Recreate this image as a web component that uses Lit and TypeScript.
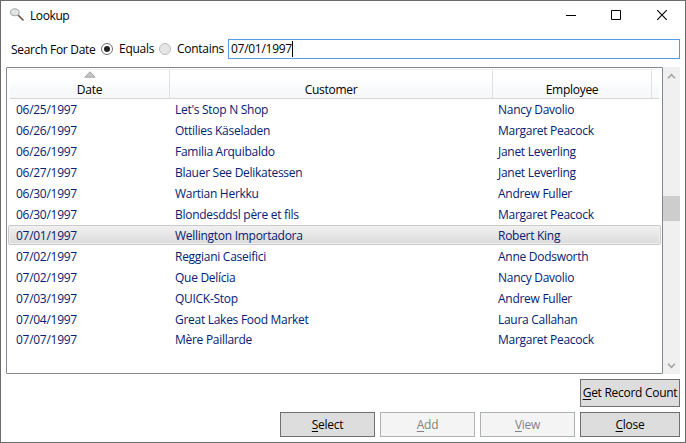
import { LitElement, html, css } from "lit";
import { customElement, property } from "lit/decorators.js";
import { classMap } from "lit/directives/class-map.js";

const ROWS: [string, string, string][] = [
  ["06/25/1997", "Let's Stop N Shop", "Nancy Davolio"],
  ["06/26/1997", "Ottilies Käseladen", "Margaret Peacock"],
  ["06/26/1997", "Familia Arquibaldo", "Janet Leverling"],
  ["06/27/1997", "Blauer See Delikatessen", "Janet Leverling"],
  ["06/30/1997", "Wartian Herkku", "Andrew Fuller"],
  ["06/30/1997", "Blondesddsl père et fils", "Margaret Peacock"],
  ["07/01/1997", "Wellington Importadora", "Robert King"],
  ["07/02/1997", "Reggiani Caseifici", "Anne Dodsworth"],
  ["07/02/1997", "Que Delícia", "Nancy Davolio"],
  ["07/03/1997", "QUICK-Stop", "Andrew Fuller"],
  ["07/04/1997", "Great Lakes Food Market", "Laura Callahan"],
  ["07/07/1997", "Mère Paillarde", "Margaret Peacock"],
];
const SELECTED = 6;

@customElement("dialog-button")
class DialogButton extends LitElement {
  @property() label = "";
  @property({ type: Boolean, reflect: true }) disabled = false;
  static styles = css`
    :host { display: block; }
    .btn {
      box-sizing: border-box; width: 100%; height: 100%; padding: 0; margin: 0;
      border: 1px solid #707070; background: #ddd; color: #000; border-radius: 0;
      font: inherit; letter-spacing: inherit; white-space: nowrap; display: flex;
      align-items: center; justify-content: center;
    }
    .btn:disabled { border-color: #adb2b5; background: #f4f4f4; color: #838383; }
    .key { text-decoration: underline; text-underline-offset: 2px; text-decoration-thickness: 1px; text-decoration-skip-ink: none; }
  `;
  render() {
    return html`<button class="btn" ?disabled=${this.disabled}><span><span class="key">${this.label[0]}</span>${this.label.slice(1)}</span></button>`;
  }
}

@customElement("app-root")
class AppRoot extends LitElement {
  static styles = css`
    :host {
      display: block; width: 686px; height: 443px; overflow: hidden;
      font: 12px/16px "Open Sans", "Noto Sans", sans-serif; letter-spacing: -0.28px; color: #000;
    }
    * { box-sizing: border-box; }
    svg { display: block; flex: none; }
    .window {
      width: 686px; height: 443px; border: 1px solid #6b6b6b; background: #fff;
      display: flex; flex-direction: column;
    }
    .title { height: 38px; padding: 0 5px 0 8px; display: flex; align-items: flex-start; }
    .title .name { margin: 7px auto 0 5px; letter-spacing: -0.4px; }
    .title .mag { margin-top: 6px; }
    .search { height: 20px; display: flex; align-items: center; padding: 0 5px 0 10px; }
    .search .lbl { width: 90px; padding-top: 1px; white-space: nowrap; letter-spacing: -0.3px; }
    .radio { width: 12px; height: 12px; border: 1px solid #707070; border-radius: 50%; background: #fff; flex: none;
      display: flex; align-items: center; justify-content: center; }
    .radio.on::after { content: ""; width: 6px; height: 6px; border-radius: 50%; background: #212121; }
    .radio.off { border-color: #bcbcbc; background: #e6e6e6; }
    .opt { display: flex; align-items: center; gap: 6px; white-space: nowrap; }
    .opt.a { width: 58px; }
    .opt.b { width: 69px; }
    .box { height: 20px; flex: 1; border: 1px solid #569de5; padding-left: 2px; display: flex; align-items: center; }
    .caret { width: 1px; height: 16px; background: #000; }
    .list { margin: 8px 5px 0 5px; height: 307px; display: flex; }
    .grid { width: 657px; border: 1px solid #828790; border-radius: 1px; padding: 1px 1px 0; }
    .head {
      margin: 0 2px; height: 30px; border-bottom: 1px solid #d5d5d5;
      background: linear-gradient(#fff, #fff 35%, #f9fafb 60%, #f7f8fa);
      border-top: 1px solid #f2f2f2; display: grid; grid-template-columns: 160px 323px 159px 1fr;
    }
    .cell { border-right: 1px solid #dfe0e2; display: flex; flex-direction: column; align-items: center; justify-content: flex-end; }
    .cell:last-child { border-right: 0; }
    .cell .sort { margin-bottom: auto; margin-top: 1px; }
    .cell span { height: 16px; }
    .row {
      height: 21px; display: grid; grid-template-columns: 159px 323px 1fr; align-items: center;
      padding-left: 7px; border: 1px solid transparent; color: #042271; white-space: nowrap;
    }
    .row:last-child { height: 20px; }
    .row.sel { height: 20px; margin-bottom: 1px; padding-top: 1px; border-color: #cacaca; border-radius: 2px;
      background: linear-gradient(#f1f1f1, #dbdbdb); box-shadow: inset 0 0 0 1px #f0f0f0; }
    .scroll { width: 17px; background: #f0f0f0; display: flex; flex-direction: column; align-items: center; }
    .up { height: 129px; padding-top: 6px; }
    .thumb { width: 17px; height: 25px; background: #cdcdcd; }
    .down { margin: auto 0 5px; }
    .count { display: flex; justify-content: flex-end; padding: 5px 5px 0; }
    .count dialog-button { width: 100px; height: 28px; }
    .actions { display: grid; grid-template-columns: 95px 95px 95px 100px; gap: 5px; justify-content: end; padding: 5px 5px 0; }
    .actions dialog-button { height: 25px; }
  `;

  render() {
    return html`
      <div class="window">
        <div class="title">
          <svg class="mag" width="16" height="16" viewBox="0 0 16 16">
            <path d="M9.5 8.5L14 13" stroke="#6f4a3c" stroke-width="1.6" stroke-linecap="round"></path>
            <ellipse cx="5.8" cy="5.3" rx="4.4" ry="3.5" fill="#dfe1e1" stroke="#aaa" stroke-width="1.1"></ellipse>
            <path d="M3 5.2L5 3.6M6.5 7L9 5" stroke="#f7f7f7" stroke-width="1"></path>
          </svg>
          <span class="name">Lookup</span>
          <svg width="120" height="28" viewBox="0 0 120 28" fill="none" stroke="#000">
            <path d="M6 14.5h10M51.5 9.5h9v9h-9z"></path>
            <path d="M97.2 9.2l9.6 9.6M106.8 9.2l-9.6 9.6" stroke-width="1.1"></path>
          </svg>
        </div>
        <div class="search">
          <span class="lbl">Search For Date</span>
          <span class="opt a"><i class="radio on"></i><span>Equals</span></span>
          <span class="opt b"><i class="radio off"></i><span>Contains</span></span>
          <div class="box"><span>07/01/1997</span><i class="caret"></i></div>
        </div>
        <div class="list">
          <div class="grid">
            <div class="head">
              <div class="cell">
                <svg class="sort" width="12" height="7" viewBox="0 0 12 7"><path d="M6 .8L11.2 6.2H.8z" fill="#c3c3c3" stroke="#989898" stroke-width=".8"></path></svg>
                <span>Date</span>
              </div>
              <div class="cell"><span>Customer</span></div>
              <div class="cell"><span>Employee</span></div>
              <div class="cell"></div>
            </div>
            <div class="rows">
              ${ROWS.map((r, i) => html`<div class=${classMap({ row: true, sel: i === SELECTED })}>${r.map((c) => html`<span>${c}</span>`)}</div>`)}
            </div>
          </div>
          <div class="scroll">
            <div class="up"><svg width="9" height="6" viewBox="0 0 9 6"><path d="M1 5.2L4.5 1.6L8 5.2" fill="none" stroke="#a3a3a3" stroke-width="1.6"></path></svg></div>
            <div class="thumb"></div>
            <svg class="down" width="9" height="6" viewBox="0 0 9 6"><path d="M1 .8L4.5 4.4L8 .8" fill="none" stroke="#a3a3a3" stroke-width="1.6"></path></svg>
          </div>
        </div>
        <div class="count"><dialog-button label="Get Record Count"></dialog-button></div>
        <div class="actions">
          <dialog-button label="Select"></dialog-button>
          <dialog-button label="Add" disabled></dialog-button>
          <dialog-button label="View" disabled></dialog-button>
          <dialog-button label="Close"></dialog-button>
        </div>
      </div>
    `;
  }
}
